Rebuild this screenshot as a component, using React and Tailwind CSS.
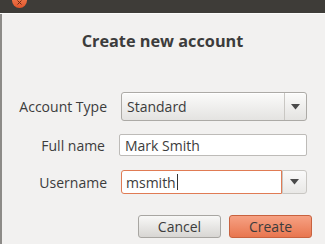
import { useState } from "react"

const font = { fontFamily: '"Open Sans", "DejaVu Sans", sans-serif' }

const Arrow = () => (
  <svg width="9" height="6" viewBox="0 0 9 6" className="block">
    <path d="M0 0 L9 0 L4.5 5.5 Z" fill="#4a4a4a" />
  </svg>
)

const App = () => {
  const [fullName, setFullName] = useState("Mark Smith")
  const [username, setUsername] = useState("msmith")

  return (
    <div className="w-[325px] h-[244px] overflow-hidden bg-[#f2f1f0] text-[#3c3c3c] flex flex-col" style={font}>
      {/* title bar */}
      <div className="relative h-[14px] shrink-0 bg-[#3e3c38] border-b border-[#fbfbfa]">
        <div className="absolute left-[12px] top-[-7px] w-[15px] h-[15px] rounded-full bg-gradient-to-b from-[#f58a5d] to-[#e0542a] flex items-end justify-center pb-[3px]">
          <svg width="5" height="5" viewBox="0 0 5 5" className="block">
            <path d="M0.5 0.5 L4.5 4.5 M4.5 0.5 L0.5 4.5" stroke="#6a2a16" strokeWidth="1" />
          </svg>
        </div>
      </div>

      <div className="flex-1 flex flex-col border-l-2 border-[#8d8b88]">
        <h1 className="text-center text-[16.3px] font-bold leading-none mt-[19px] mr-[2px]">
          Create new account
        </h1>

        <div className="grid grid-cols-[105px_186px] gap-x-[14px] mt-[43px] items-center text-[14px]">
          <label className="text-right">Account Type</label>
          <div className="h-[29px] flex rounded-[3px] border border-[#acaaa6] bg-gradient-to-b from-[#fbfbfa] to-[#e4e3e1] shadow-[inset_0_1px_0_#ffffff]">
            <span className="flex-1 pl-[5px] flex items-center">Standard</span>
            <span className="w-[22px] flex items-center justify-center border-l border-[#c9c7c3]">
              <Arrow />
            </span>
          </div>

          <label className="text-right mt-[13px] mr-[2px]">Full name</label>
          <input
            value={fullName}
            onChange={(e) => setFullName(e.target.value)}
            className="mt-[13px] -ml-[2px] w-[188px] h-[22px] px-[5px] bg-white border border-[#bdbbb8] rounded-[2px] outline-none text-[14px]"
          />

          <label className="text-right mt-[14px]">Username</label>
          <div className="mt-[14px] flex h-[24px]">
            <div className="flex-1 flex items-center pl-[4px] bg-white border border-[#e07b54] rounded-l-[3px]">
              <span>{username}</span>
              <span className="w-px h-[16px] bg-[#333] ml-px" />
            </div>
            <span className="w-[25px] flex items-center justify-center border border-[#c9c7c3] rounded-r-[3px] bg-gradient-to-b from-[#fafafa] to-[#e9e8e6]">
              <Arrow />
            </span>
          </div>
        </div>

        <div className="flex justify-end gap-[8px] mt-[21px] pr-[13px]">
          <button
            onClick={() => setUsername("")}
            className="w-[83px] h-[23px] rounded-[3px] border border-[#a8a6a2] bg-gradient-to-b from-[#f8f8f7] to-[#d8d6d3] text-[14px] leading-none"
          >
            Cancel
          </button>
          <button className="w-[83px] h-[23px] rounded-[3px] border border-[#c8623f] bg-gradient-to-b from-[#f6a183] to-[#e8764f] text-[14px] leading-none text-[#3c3c3c]">
            Create
          </button>
        </div>
      </div>
    </div>
  )
}

export default App
